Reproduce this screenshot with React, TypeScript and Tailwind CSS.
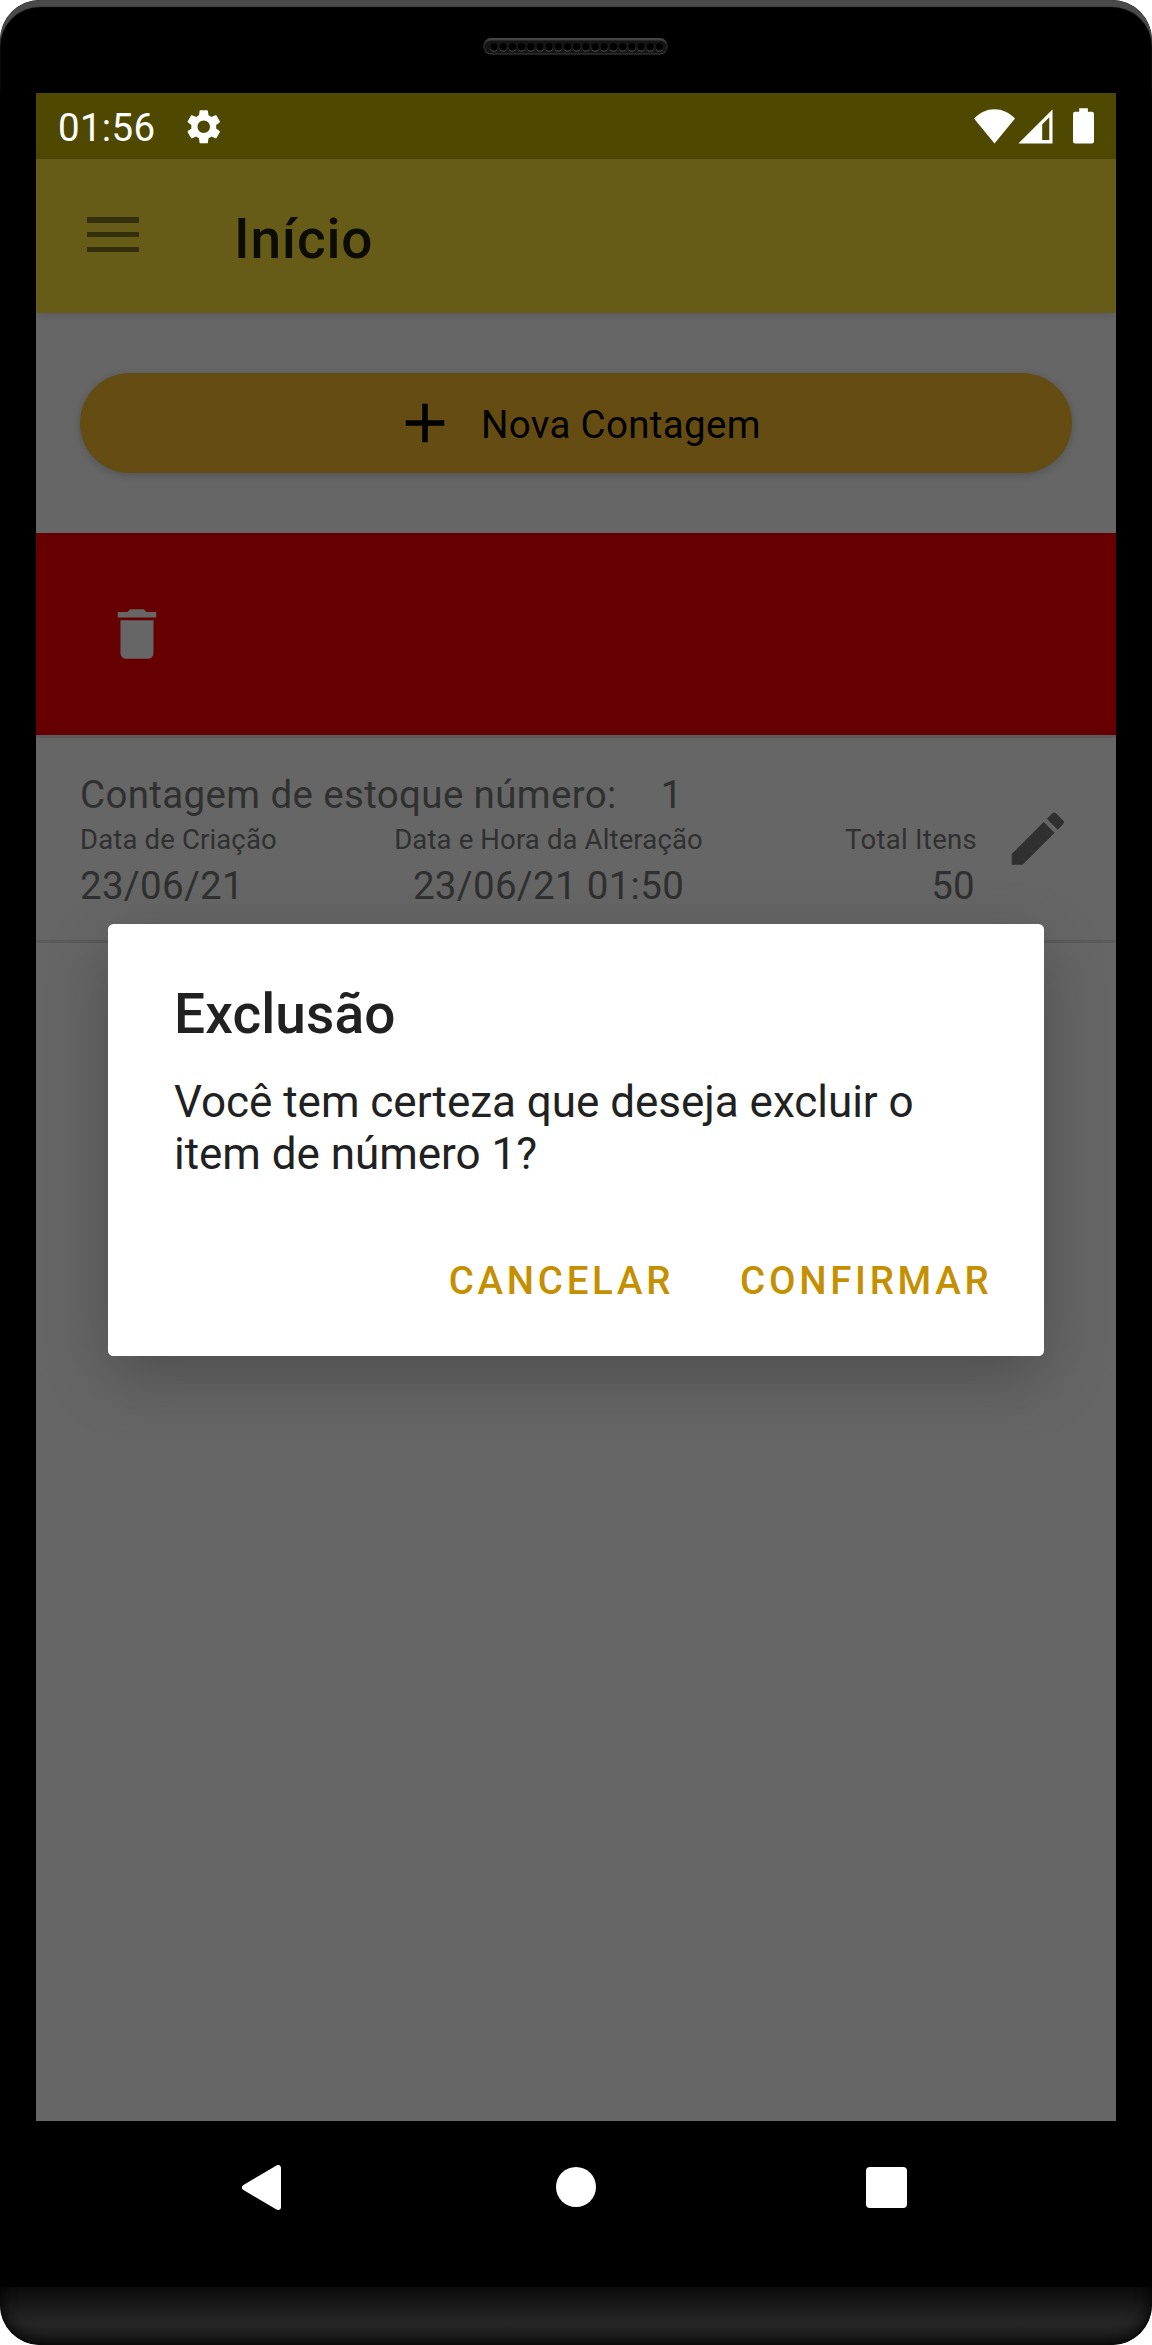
import { MdAdd, MdDelete, MdEdit, MdSettings } from "react-icons/md";

function Speaker() {
  return (
    <svg className="mr-[1px] mt-[38px] h-[17px] w-[185px]" viewBox="0 0 185 17">
      <defs>
        <linearGradient id="speakerRim" x1="0" y1="0" x2="0" y2="1">
          <stop offset="0" stopColor="#4c4c4c" />
          <stop offset="0.35" stopColor="#262626" />
          <stop offset="0.7" stopColor="#222222" />
          <stop offset="1" stopColor="#434343" />
        </linearGradient>
      </defs>
      <rect x="0" y="0" width="185" height="16.6" rx="8.3" fill="url(#speakerRim)" />
      <rect x="1.8" y="2.6" width="181.4" height="12.8" rx="6.4" fill="#151515" />
      {Array.from({ length: 19 }, (_, i) => (
        <g key={i}>
          <circle cx={11 + i * 9.19} cy="9.9" r="3.7" fill="#505050" />
          <circle cx={11 + i * 9.19} cy="8.900" r="3.7" fill="#000000" />
        </g>
      ))}
    </svg>
  );
}

function StatusBar() {
  return (
    <div className="flex h-[66px] items-center bg-[#4f4800] pl-[22px] pr-[22px] text-white">
      <span className="mt-1 text-[38.5px] leading-[46px] tracking-[0.3px]">01:56</span>
      <MdSettings className="ml-[28px] mt-px size-[41.5px]" />
      <svg className="ml-auto h-[35px] w-[41px]" viewBox="0 0 41 35" fill="currentColor">
        <path d="M0 9.6C5.6 3.6 12.600 0.2 20.500 0.2S35.400 3.600 41 9.600L20.500 34.500Z" />
      </svg>
      <svg className="ml-[3px] h-[35px] w-[35px]" viewBox="0 0 35 35" fill="currentColor">
        <path fillRule="evenodd" d="M34.500 0.400V34.500H0.400ZM31.300 8.300L24.200 15.600V31H31.300Z" />
      </svg>
      <svg className="ml-5 h-9 w-[21px]" viewBox="0 0 21 36" fill="currentColor">
        <path d="M6.200 0.200H14.900V3.800H18.900Q21 3.800 21 5.900V33.500Q21 35.600 18.900 35.600H2.100Q0 35.600 0 33.500V5.900Q0 3.800 2.100 3.800H6.200Z" />
      </svg>
    </div>
  );
}

function AppBar() {
  return (
    <div className="relative flex h-[154px] bg-[#665c18] pl-[51px] shadow-[0_2px_8px_rgba(0,0,0,0.12)]">
      <div className="mt-[58px] flex h-[35px] w-[52px] flex-col justify-between">
        <div className="h-[5.5px] bg-[#332e0c]" />
        <div className="h-[5.5px] bg-[#332e0c]" />
        <div className="h-[5.5px] bg-[#332e0c]" />
      </div>
      <h1 className="ml-[95px] mt-12 text-[55px] font-medium leading-[64px] tracking-[0.8px] text-[#0d0c03]">
        Início
      </h1>
    </div>
  );
}

function ListItem() {
  return (
    <div className="flex h-[205px] border-b-[3px] border-[#5b5b5b] pl-11 text-[#303030]">
      <div className="w-[897px] shrink-0 pt-[34px]">
        <div className="flex gap-[44px] whitespace-nowrap text-[38.5px] leading-[46px] tracking-[0.36px]">
          <span>Contagem de estoque número:</span>
          <span>1</span>
        </div>
        <div className="mt-1.5 flex whitespace-nowrap">
          <div className="w-[314px]">
            <div className="text-[27.5px] leading-8 tracking-[0.15px]">Data de Criação</div>
            <div className="mt-[7px] text-[38.5px] leading-[46px] tracking-[0.3px]">23/06/21</div>
          </div>
          <div className="w-[309px] text-center">
            <div className="text-[27.5px] leading-8 tracking-[0.14px]">Data e Hora da Alteração</div>
            <div className="mt-[7px] text-[38.5px] leading-[46px] tracking-[0.3px]">23/06/21 01:50</div>
          </div>
          <div className="flex-1 text-right">
            <div className="text-[27.5px] leading-8 tracking-[0.3px]">Total Itens</div>
            <div className="mt-[7px] pr-0.5 text-[38.5px] leading-[46px] tracking-[0.3px]">50</div>
          </div>
        </div>
      </div>
      <MdEdit className="ml-[26px] mt-[66px] size-[69.5px] shrink-0" />
    </div>
  );
}

function DeleteDialog() {
  return (
    <div className="absolute left-[72px] top-[831px] h-[432px] w-[936px] rounded-[5.5px] bg-white pl-[66px] pr-[51.5px] pt-[58px] text-[#212121] shadow-[0_22px_66px_rgba(0,0,0,0.24)]">
      <h2 className="text-[55px] font-medium leading-[64px] tracking-[0.1px]">Exclusão</h2>
      <p className="mt-[30px] w-[760px] text-[44px] leading-[52px] tracking-[-0.03px]">
        Você tem certeza que deseja excluir o item de número 1?
      </p>
      <div className="mt-[78px] flex justify-end gap-[66px] text-[38.5px] font-medium leading-[46px] tracking-[3.7px] text-[#c59000]">
        <button>CANCELAR</button>
        <button>CONFIRMAR</button>
      </div>
    </div>
  );
}

export default function App() {
  return (
    <div className="h-[2345px] w-[1152px] bg-white font-['Roboto',sans-serif]">
      <div className="flex h-full w-full flex-col overflow-hidden rounded-[40px] bg-black">
        <div className="flex h-[93px] justify-center rounded-t-[40px] shadow-[inset_0_7px_1px_0_#4a4a4a]">
          <Speaker />
        </div>

        <div className="relative mx-9 h-[2028px] shrink-0 overflow-hidden bg-[#666666]">
          <StatusBar />
          <AppBar />
          <div className="h-[220px] px-11 pt-[60px]">
            <button className="flex h-[100px] w-full rounded-full bg-[#654c12] pl-[312px] text-black shadow-[0_2px_8px_rgba(0,0,0,0.2)]">
              <MdAdd className="mt-[17px] size-[66px]" />
              <span className="ml-[23px] mt-[29px] whitespace-nowrap text-[38.5px] leading-[46px] tracking-[0.32px]">
                Nova Contagem
              </span>
            </button>
          </div>
          <div className="h-[205px] border-b-[3px] border-[#5b5b5b] bg-[#660000] pl-[68px] pt-[68px] text-[#666666]">
            <MdDelete className="size-[66px]" />
          </div>
          <ListItem />
          <DeleteDialog />
        </div>

        <div className="flex h-[166px] shrink-0 pl-[242px]">
          <svg className="mt-11 h-[45px] w-[39px]" viewBox="0 0 39 45">
            <path d="M3 22.500L36 3V42Z" fill="white" stroke="white" strokeWidth="6" strokeLinejoin="round" />
          </svg>
          <div className="ml-[275px] mt-[46px] size-10 rounded-full bg-white" />
          <div className="ml-[270px] mt-[46px] size-[41px] rounded-[4px] bg-white" />
        </div>

        {/* Lower chin: the tall inset box keeps the edge shading off the flat top border. */}
        <div className="flex h-[58px] shrink-0 flex-col justify-end overflow-hidden rounded-b-[40px] bg-[linear-gradient(to_bottom,#0b0b0b_0%,#181818_30%,#262626_62%,#222222_80%,#202020_100%)]">
          <div className="h-[110px] shrink-0 rounded-b-[40px] shadow-[inset_0_-3px_16px_0_#000]" />
        </div>
      </div>
    </div>
  );
}
